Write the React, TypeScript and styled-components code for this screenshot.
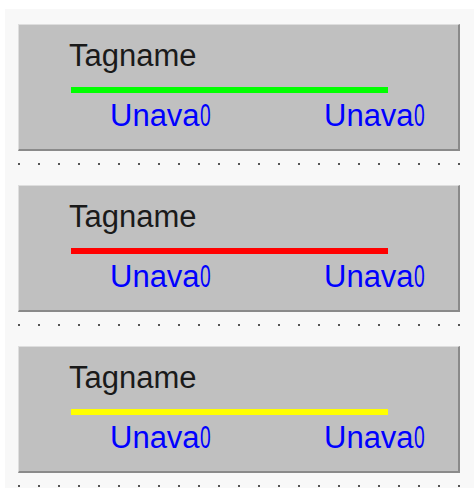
import React from "react";
import styled, { createGlobalStyle } from "styled-components";

const GlobalStyle = createGlobalStyle`
  html, body {
    margin: 0;
    padding: 0;
    background: #ffffff;
    font-family: "Liberation Sans", Arial, sans-serif;
  }
`;

const Page = styled.div`
  width: 474px;
  height: 488px;
  padding: 9px 0 0 5px;
  box-sizing: border-box;
  background: #ffffff;
  overflow: hidden;
`;

const Canvas = styled.div`
  height: 100%;
  background: #f8f8f8;
  padding: 15px 0 0 13px;
  box-sizing: border-box;
  display: flex;
  flex-direction: column;
`;

const Panel = styled.div`
  flex-shrink: 0;
  width: 442px;
  height: 127px;
  box-sizing: border-box;
  background: #c0c0c0;
  border-top: 1px solid #dedede;
  border-left: 1px solid #dedede;
  border-right: 2px solid #8a8a8a;
  border-bottom: 2px solid #8a8a8a;
  padding: 15px 0 0 50px;
`;

const TagName = styled.div`
  font-size: 31px;
  line-height: 31px;
  color: #1a1a1a;
`;

const StatusLine = styled.div<{ color: string }>`
  margin: 16px 0 0 2px;
  width: 317px;
  height: 6px;
  background: ${({ color }) => color};
`;

const ValueRow = styled.div`
  margin: 7px 0 0 41px;
  display: grid;
  grid-template-columns: 214px auto;
`;

const Value = styled.div`
  font-size: 31px;
  line-height: 31px;
  color: #0000ff;
  white-space: nowrap;
`;

const Clipped = styled.span`
  display: inline-block;
  transform: scaleX(0.62);
  transform-origin: left center;
`;

const DotRow = styled.div`
  flex-shrink: 0;
  width: 443px;
  height: 2px;
  margin: 12px 0 20px 0;
  background-image: linear-gradient(to right, #555555 2px, transparent 2px);
  background-size: 20px 2px;
  background-repeat: repeat-x;
`;

const tags = ["#00ff00", "#ff0000", "#ffff00"];

const Tag: React.FC<{ color: string }> = ({ color }) => (
  <>
    <Panel>
      <TagName>Tagname</TagName>
      <StatusLine color={color} />
      <ValueRow>
        <Value>
          Unava<Clipped>0</Clipped>
        </Value>
        <Value>
          Unava<Clipped>0</Clipped>
        </Value>
      </ValueRow>
    </Panel>
    <DotRow />
  </>
);

export default function App() {
  return (
    <>
      <GlobalStyle />
      <Page>
        <Canvas>
          {tags.map((c) => (
            <Tag key={c} color={c} />
          ))}
        </Canvas>
      </Page>
    </>
  );
}
